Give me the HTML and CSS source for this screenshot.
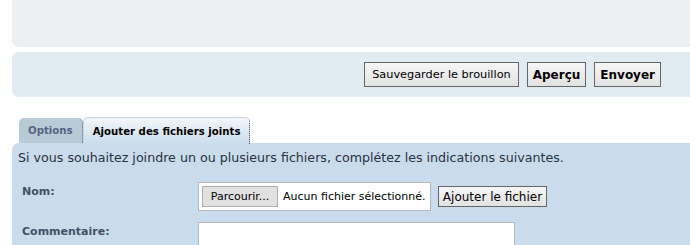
FILE: index.html
```html
<!DOCTYPE html>
<html lang="fr">
<head>
<meta charset="utf-8">
<title>Pièces jointes</title>
<link rel="stylesheet" href="styles.css">
</head>
<body>
<div class="page">
  <div class="panel panel-top"></div>
  <div class="panel panel-actions">
    <button class="btn">Sauvegarder le brouillon</button>
    <button class="btn btn-bold">Aperçu</button>
    <button class="btn btn-bold">Envoyer</button>
  </div>
  <div class="tabs">
    <div class="tab">Options</div>
    <div class="tab tab-active">Ajouter des fichiers joints</div>
  </div>
  <div class="panel panel-content">
    <p class="intro">Si vous souhaitez joindre un ou plusieurs fichiers, complétez les indications suivantes.</p>
    <div class="row">
      <div class="label">Nom:</div>
      <div class="field">
        <div class="file">
          <span class="file-btn">Parcourir...</span>
          <span class="file-name">Aucun fichier sélectionné.</span>
        </div>
        <button class="btn btn-add">Ajouter le fichier</button>
      </div>
    </div>
    <div class="row row-comment">
      <div class="label">Commentaire:</div>
      <div class="field">
        <div class="textarea"></div>
      </div>
    </div>
  </div>
</div>
</body>
</html>
```
FILE: styles.css
```css
html, body {
  margin: 0;
  padding: 0;
  overflow: hidden;
  background: #ffffff;
}
body {
  font-family: "DejaVu Sans", Verdana, sans-serif;
  color: #333333;
}
.page {
  width: 690px;
  padding-left: 12px;
}
.panel {
  box-sizing: border-box;
}
.panel-top {
  height: 47px;
  background: #ECF0F3;
  border-radius: 0 0 0 7px;
  margin-bottom: 5px;
}
.panel-actions {
  height: 45px;
  background: #E1EBF2;
  border-radius: 7px;
  display: flex;
  justify-content: flex-end;
  align-items: flex-start;
  padding: 10px 41px 0 0;
  gap: 8px;
}
.btn {
  box-sizing: border-box;
  height: 25px;
  padding: 0 7px;
  border: 1px solid #666666;
  background: linear-gradient(#f6f6f6, #e2e2e2);
  font-family: "DejaVu Sans", Tahoma, sans-serif;
  font-size: 11.3px;
  color: #000000;
  border-radius: 0;
  margin: 0;
}
.btn-bold {
  font-weight: bold;
  font-size: 12px;
  padding: 0 5px;
}
.tabs {
  display: flex;
  align-items: flex-end;
  margin-top: 20px;
  padding-left: 7px;
  height: 26px;
}
.tab {
  box-sizing: border-box;
  height: 25px;
  padding: 0 9px;
  background: #B9CAD7;
  font-size: 10.2px;
  font-weight: bold;
  color: #536482;
  display: flex;
  align-items: center;
  border-radius: 5px 5px 0 0;
  border-right: 1px dotted #666f80;
}
.tab-active {
  height: 27px;
  background: linear-gradient(#f3f7fa, #CADCEB);
  color: #000000;
  border: 1px solid #c7d3dd;
  border-bottom: none;
  border-right: 1px dotted #3d4a5c;
  padding: 0 9px;
  margin-bottom: -1px;
}
.panel-content {
  background: #CADCEB;
  border-radius: 7px 0 0 0;
  padding: 7px 0 20px 6px;
  height: 120px;
}
.intro {
  margin: 0;
  font-size: 12.65px;
  line-height: 16px;
  color: #28313F;
}
.row {
  display: flex;
  margin-top: 16px;
}
.row-comment {
  margin-top: 11px;
}
.label {
  width: 176px;
  padding-left: 4px;
  padding-top: 3px;
  font-size: 11px;
  font-weight: bold;
  color: #425067;
}
.field {
  display: flex;
  align-items: center;
  gap: 7px;
}
.file {
  box-sizing: border-box;
  width: 233px;
  height: 29px;
  background: #ffffff;
  border: 1px solid #B4BAC0;
  display: flex;
  align-items: center;
  padding-left: 3px;
  gap: 5px;
}
.file-btn {
  box-sizing: border-box;
  height: 21px;
  width: 76px;
  background: #E1E1E1;
  border: 1px solid #ADADAD;
  font-family: "DejaVu Sans", Tahoma, sans-serif;
  font-size: 11px;
  color: #000;
  display: flex;
  align-items: center;
  justify-content: center;
}
.file-name {
  font-family: "DejaVu Sans", Tahoma, sans-serif;
  font-size: 11px;
  color: #000;
  white-space: nowrap;
}
.btn-add {
  height: 21px;
  width: 109px;
  padding: 0;
  font-size: 12px;
}
.textarea {
  box-sizing: border-box;
  width: 317px;
  height: 40px;
  background: #ffffff;
  border: 1px solid #B4BAC0;
}
```
